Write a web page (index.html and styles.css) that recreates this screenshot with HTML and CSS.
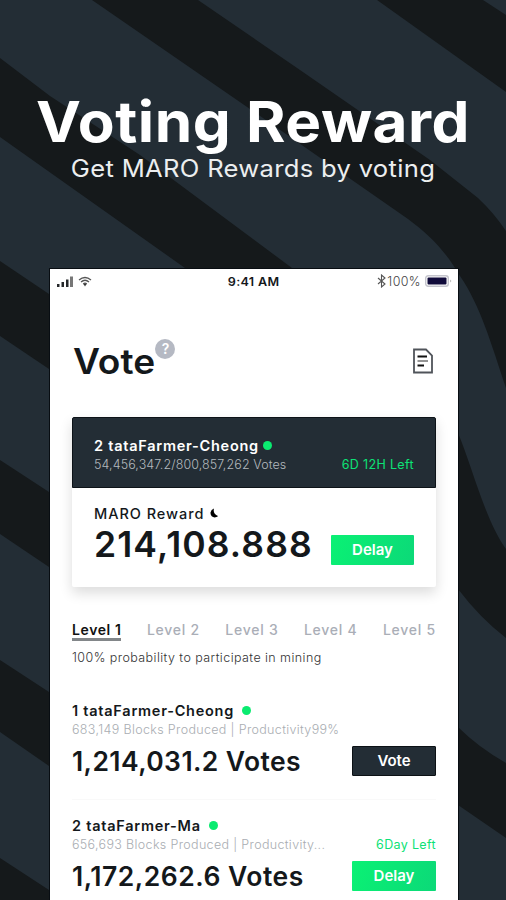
FILE: index.html
```html
<!DOCTYPE html>
<html lang="en">
<head>
<meta charset="utf-8">
<title>Voting Reward</title>
<link rel="stylesheet" href="styles.css">
</head>
<body>
<div class="page">
  <svg class="stripes" viewBox="0 0 506 900" aria-hidden="true">
    <path d="M92 0H198L300 70L430 160L478 198Q494 213 506 231V388C491 343 480 305 460 276C446 252 431 236 408 219L250 109Z"/>
    <path d="M377 0H483L506 15V92Z"/>
    <path d="M0 58L50 96L140 155L292 268H185L0 137Z"/>
    <path d="M0 261L49 294V369L0 336Z"/>
    <path d="M0 460L49 492V567L0 534Z"/>
    <path d="M0 660L49 692V766L0 732Z"/>
    <path d="M0 858L49 890V900H0Z"/>
    <path d="M458 433C472 466 485 520 506 549V638Q480 618 458 589Z"/>
    <path d="M458 727Q478 747 506 763V838L458 805Z"/>
  </svg>
  <header class="hero">
    <h1>Voting Reward</h1>
    <p>Get MARO Rewards by voting</p>
  </header>
  <main class="phone">
    <div class="status">
      <div class="status-left">
        <svg class="signal" viewBox="0 0 17 11"><path d="M0 8h2.500v3H0zM4.500 6H7v5H4.500zM9 3.500h2.500V11H9z"/><path class="soft" d="M13 0.500h3V11h-3z"/></svg>
        <svg class="wifi" viewBox="0 0 14 11"><path d="M1 4Q7-1 13 4M3 6Q7 2.500 11 6M5.200 8Q7 6.500 8.800 8"/><path class="fill" d="M5.500 8L7 10.500L8.500 8Z"/></svg>
      </div>
      <span class="clock">9:41 AM</span>
      <div class="status-right">
        <svg class="bluetooth" viewBox="0 0 9 14"><path d="M1 4L8 10L4.500 13V1L8 4L1 10"/></svg>
        <span class="charge">100%</span>
        <svg class="battery" viewBox="0 0 28 12"><rect class="shell" x=".7" y=".7" width="22.600" height="10.600" rx="2.500"/><rect class="level" x="2.500" y="2.500" width="19" height="7" rx="1"/><path class="tip" d="M25 4.500v3l1.500-1.500z"/></svg>
      </div>
    </div>
    <div class="title">
      <h2>Vote</h2><span class="help">?</span>
      <svg class="doc" viewBox="0 0 22 26"><path class="edge" d="M2 1.500H14L20 7.500V24.500H2Z"/><path d="M5.500 8.500H15M5.500 17.500H12"/><path class="soft" d="M5.500 13H16"/></svg>
    </div>
    <section class="card">
      <div class="card-head">
        <div class="name">2 tataFarmer-Cheong<i class="dot"></i></div>
        <div class="row"><span class="meta">54,456,347.2/800,857,262 Votes</span><span class="left">6D 12H Left</span></div>
      </div>
      <div class="card-body">
        <div>
          <div class="label">MARO Reward<svg class="moon" viewBox="0 0 8 10"><path d="M4 .5C3 4 4.500 6.500 8 8C5 11 0 9 .5 4.500Q1 1.500 4 .5Z"/></svg></div>
          <div class="amount">214,108.888</div>
        </div>
        <button class="button green">Delay</button>
      </div>
    </section>
    <nav class="tabs">
      <span class="tab active">Level 1</span><span class="tab">Level 2</span><span class="tab">Level 3</span><span class="tab">Level 4</span><span class="tab">Level 5</span>
    </nav>
    <p class="note">100% probability to participate in mining</p>
    <article class="farmer">
      <div class="name wide">1 tataFarmer-Cheong<i class="dot"></i></div>
      <div class="row"><span class="blocks">683,149 Blocks Produced | Productivity99%</span></div>
      <div class="row votes-row"><span class="votes">1,214,031.2 Votes</span><button class="button dark">Vote</button></div>
    </article>
    <article class="farmer second">
      <div class="name wide">2 tataFarmer-Ma<i class="dot"></i></div>
      <div class="row"><span class="blocks">656,693 Blocks Produced | Productivity...</span><span class="left">6Day Left</span></div>
      <div class="row votes-row"><span class="votes last">1,172,262.6 Votes</span><button class="button green">Delay</button></div>
    </article>
  </main>
</div>
</body>
</html>
```
FILE: styles.css
```css
* { box-sizing: border-box; }
body { margin: 0; font-family: Inter, "Liberation Sans", sans-serif; color: #14181b; }
h1, h2, p { margin: 0; }
.page { position: relative; width: 506px; height: 900px; overflow: hidden; background: #232d35; }
.stripes { position: absolute; inset: 0; width: 506px; height: 900px; fill: #15191b; }
.hero { position: relative; height: 269px; padding-top: 91px; color: #fff; text-align: center; white-space: nowrap; }
.hero h1 { font-size: 56px; line-height: 62px; font-weight: 700; letter-spacing: .5px; transform: scaleX(1.075); }
.hero p { font-size: 24px; line-height: 32px; letter-spacing: .3px; color: #eceeef; transform: scaleX(1.065); }
.phone { position: relative; width: 408px; height: 631px; margin-left: 50px; padding: 0 22px; background: #fff; box-shadow: 0 0 0 1px #080d12; white-space: nowrap; }
.status { display: grid; grid-template-columns: 1fr auto 1fr; align-items: center; height: 24px; margin: 0 -17px; }
.status-left, .status-right { display: flex; align-items: center; }
.status-left { gap: 4px; padding-left: 2px; }
.status-right { justify-content: flex-end; }
.signal { width: 17px; height: 11px; fill: #25282a; }
.signal .soft { fill: #777; }
.wifi { width: 14px; height: 11px; fill: none; stroke: #555; stroke-width: 1.3; }
.wifi .fill { fill: #333; stroke: none; }
.clock { font-size: 12px; font-weight: 600; letter-spacing: .3px; transform: scaleX(1.05); }
.bluetooth { width: 9px; height: 14px; fill: none; stroke: #555; stroke-width: 1.1; }
.charge { font-size: 12.500px; font-weight: 300; letter-spacing: .4px; color: #444; margin: 0 4px 0 1px; }
.battery { width: 28px; height: 12px; }
.shell { fill: #fff; stroke: #c4c4cc; stroke-width: 1.4; }
.level { fill: #100b3a; }
.tip { fill: #bbb; }
.title { display: flex; align-items: flex-start; height: 124px; padding: 44px 1px 0; }
.title h2 { font-size: 35px; line-height: 49px; font-weight: 600; transform: scaleX(1.06); transform-origin: left; }
.help { width: 20px; height: 20px; margin: 2px 0 0 5px; border-radius: 50%; background: #b5b9c3; color: #fff; font-size: 14px; line-height: 20px; font-weight: 600; text-align: center; }
.doc { width: 22px; height: 26px; margin: 11px 1px 0 auto; fill: none; stroke: #111; stroke-width: 1.8; }
.doc .edge { stroke: #50545a; }
.doc .soft { stroke: #888; }
.card { height: 170px; border-radius: 2px; box-shadow: 0 6px 13px rgba(0, 0, 0, .14); }
.card-head { height: 71px; padding: 17px 21px 0; border: 1px solid #0d1318; border-radius: 2px 2px 0 0; background: #232d35; color: #fff; }
.name { display: flex; align-items: center; height: 20px; font-size: 14.500px; font-weight: 600; letter-spacing: .75px; }
.dot { width: 9px; height: 9px; margin-left: 4px; border-radius: 50%; background: #0aeb70; }
.row { display: flex; align-items: center; justify-content: space-between; height: 19px; }
.meta { font-size: 12.500px; font-weight: 300; letter-spacing: .1px; color: #b3b9be; }
.left { font-size: 12.500px; letter-spacing: .35px; color: #0de276; }
.card-body { display: flex; justify-content: space-between; padding: 15px 22px 0; }
.label { display: flex; align-items: center; height: 20px; font-size: 14.500px; font-weight: 500; letter-spacing: .95px; }
.moon { width: 8px; height: 10px; margin-left: 6px; }
.amount { font-size: 35.500px; line-height: 43px; font-weight: 600; letter-spacing: 1.1px; }
.button { width: 84px; height: 30px; padding: 0; border: 0; border-radius: 1px; font: 600 15px/30px Inter, sans-serif; color: #fff; text-align: center; }
.green { background: linear-gradient(110deg, #0af174, #0cd978); }
.dark { background: #232d35; border: 1px solid #0c1115; line-height: 28px; }
.card-body .button { width: 83px; margin-top: 32px; }
.tabs { display: flex; justify-content: space-between; height: 36px; margin-top: 33px; }
.tab { height: 21px; font-size: 14px; line-height: 19px; font-weight: 500; letter-spacing: .75px; color: #aaaeb7; }
.tab.active { color: #111; font-weight: 600; border-bottom: 3px solid #828689; letter-spacing: .6px; }
.note { height: 44px; font-size: 12.500px; line-height: 16px; font-weight: 300; letter-spacing: .43px; color: #333; margin-top: -6px; }
.farmer { height: 105px; padding-top: 6px; }
.farmer.second { border-top: 1px solid #f9f9f9; padding-top: 15px; }
.wide .dot { margin-left: 8px; }
.blocks { font-size: 12.500px; font-weight: 300; letter-spacing: .34px; color: #a9adb2; }
.votes-row { height: 44px; }
.votes { font-size: 26.500px; font-weight: 600; letter-spacing: .4px; }
.votes.last { letter-spacing: .5px; }
```
